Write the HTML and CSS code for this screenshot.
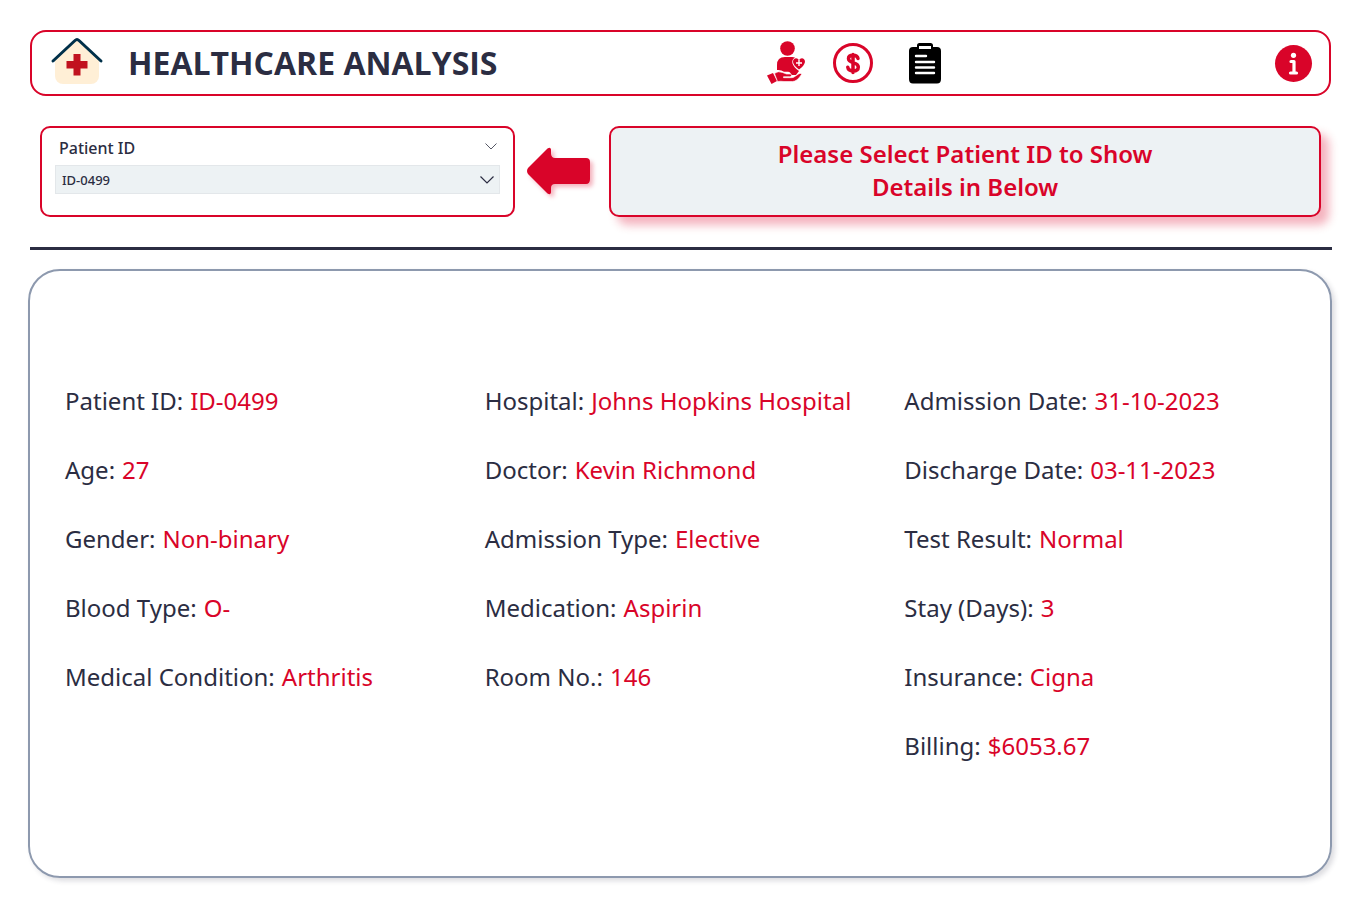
FILE: index.html
```html
<!DOCTYPE html>
<html lang="en">
<head>
<meta charset="utf-8">
<meta name="viewport" content="width=device-width, initial-scale=1">
<title>Healthcare Analysis</title>
<link rel="stylesheet" href="styles.css">
</head>
<body>
<header class="topbar">
  <svg class="logo" viewBox="0 0 52 48" aria-hidden="true">
    <path d="M4 19 26 1 48 19V37a8 8 0 0 1-8 8H12a8 8 0 0 1-8-8Z" fill="#ffefd6"/>
    <path d="M2 22 24 1.500Q26-.5 28 1.500L50 22" fill="none" stroke="#00304a" stroke-width="3" stroke-linecap="round"/>
    <path d="M22.500 15h7v7h7v7.500h-7v7h-7v-7h-7V22h7Z" fill="#c1121f"/>
  </svg>
  <h1 class="title">HEALTHCARE ANALYSIS</h1>
  <nav class="nav">
    <button class="icon-button" aria-label="Patient care">
      <svg width="38" height="43" viewBox="0 0 38 43" fill="#d90429">
        <circle cx="20.500" cy="6.500" r="7.300"/>
        <path d="M10 28V23q0-8 8-8h7q2 0 3 .5-3.500 2-2.500 6 1.500 4 6.500 7.500L29 33h-5q0-3-3-3.200h-4q-3-2.300-7-1.800Z"/>
        <path d="M32 27.500Q26.500 23.500 26 20c0-4 4.500-5 6-1.500 1.500-3.500 6-2.500 6 1.500Q37 24 32 27.500Z"/>
        <path d="M32 18v6M29 21h6" stroke="#fff" stroke-width="1.400"/>
        <path d="M0 33.500 6 31 10 39 4.500 42Z"/>
        <path d="M7.500 31.500q3.500-3 8-1l4 1.500h3.500q2 0 1.500 1.500-.5 1.200-2 1.200h-6v1h8q2 0 3-1l4.500-3q2.500-.8 2.500.8Q30 39.500 25.500 39.500H17q-3.500-.5-6.500 0Z" stroke="#fff" stroke-width=".6"/>
      </svg>
    </button>
    <button class="icon-button" aria-label="Billing">
      <svg width="40" height="40" viewBox="0 0 40 40">
        <circle cx="20" cy="20" r="18.500" fill="none" stroke="#d90429" stroke-width="3"/>
        <path d="M25 15.500q-.5-3.200-5-3.200-4.500 0-4.500 3.300c0 5.500 9.800 3 9.800 8.300q0 4-5.300 4-4.700 0-5.200-3.600M20 11.500v18" fill="none" stroke="#d90429" stroke-width="3.500" stroke-linecap="round"/>
      </svg>
    </button>
    <button class="icon-button icon-button-last" aria-label="Patient details">
      <svg width="32" height="41" viewBox="0 0 32 41">
        <path d="M4 4h4V2.500Q8 0 10.500 0h11Q24 0 24 2.500V4h4q4 0 4 4v28q0 4.500-4 4.500H4q-4 0-4-4.500V8q0-4 4-4Z"/>
        <path d="M10 3h12v3H10Z" fill="#fff"/>
        <path d="M7 13h10M7 19h18M7 24.500h18M7 30h18" stroke="#fff" stroke-width="2.400" stroke-linecap="round"/>
      </svg>
    </button>
  </nav>
  <button class="icon-button" aria-label="Information">
    <svg width="37" height="37" viewBox="0 0 37 37">
      <circle cx="18.500" cy="18.500" r="18.500" fill="#d90429"/>
      <circle cx="18.500" cy="10.300" r="2.600" fill="#fff"/>
      <path d="M16 16.500h3v11M15.500 28h6" fill="none" stroke="#fff" stroke-width="3.200" stroke-linecap="round" stroke-linejoin="round"/>
    </svg>
  </button>
</header>

<section class="selector">
  <div class="filter">
    <div class="filter-head">
      <label for="patient">Patient ID</label>
      <button class="icon-button" aria-label="Collapse filter">
        <svg width="12" height="10" viewBox="0 0 12 10"><path d="m.5.5 5.500 5.500L11.500.5" fill="none" stroke="#555765"/></svg>
      </button>
    </div>
    <div class="select-wrap">
      <select id="patient" class="select"><option>ID-0499</option></select>
      <svg class="select-arrow" width="14" height="8" viewBox="0 0 14 8" aria-hidden="true"><path d="m.5.5 6.500 6.500L13.500.5" fill="none" stroke="#2b2d42" stroke-width="1.200"/></svg>
    </div>
  </div>
  <svg class="arrow" width="64" height="48" viewBox="0 0 64 48" aria-hidden="true">
    <path d="M1 20 20.500.5Q23.500-1.500 24 1.500V6q.5 4 4 4h31q4 0 4 4v17q0 5-4 5H28q-4 0-4 4v4.500q-.5 3-3.500 1L1 26q-2-3 0-6Z" fill="#d90429"/>
  </svg>
  <p class="banner">Please Select Patient ID to Show<br>Details in Below</p>
</section>

<hr class="divider">

<main class="panel">
  <dl class="column">
    <div class="field"><dt>Patient ID:</dt><dd>ID-0499</dd></div>
    <div class="field"><dt>Age:</dt><dd>27</dd></div>
    <div class="field"><dt>Gender:</dt><dd>Non-binary</dd></div>
    <div class="field"><dt>Blood Type:</dt><dd>O-</dd></div>
    <div class="field"><dt>Medical Condition:</dt><dd>Arthritis</dd></div>
  </dl>
  <dl class="column">
    <div class="field"><dt>Hospital:</dt><dd>Johns Hopkins Hospital</dd></div>
    <div class="field"><dt>Doctor:</dt><dd>Kevin Richmond</dd></div>
    <div class="field"><dt>Admission Type:</dt><dd>Elective</dd></div>
    <div class="field"><dt>Medication:</dt><dd>Aspirin</dd></div>
    <div class="field"><dt>Room No.:</dt><dd>146</dd></div>
  </dl>
  <dl class="column">
    <div class="field"><dt>Admission Date:</dt><dd>31-10-2023</dd></div>
    <div class="field"><dt>Discharge Date:</dt><dd>03-11-2023</dd></div>
    <div class="field"><dt>Test Result:</dt><dd>Normal</dd></div>
    <div class="field"><dt>Stay (Days):</dt><dd>3</dd></div>
    <div class="field"><dt>Insurance:</dt><dd>Cigna</dd></div>
    <div class="field"><dt>Billing:</dt><dd>$6053.67</dd></div>
  </dl>
</main>
</body>
</html>
```
FILE: styles.css
```css
* {
  box-sizing: border-box;
}

body {
  display: flex;
  flex-direction: column;
  min-height: 100vh;
  margin: 0;
  padding: 30px 25px 25px 28px;
  background: #fff;
  color: #2b2d42;
  font-family: "Noto Sans", "Open Sans", sans-serif;
}

.topbar {
  display: flex;
  align-items: center;
  height: 66px;
  margin: 0 1px 0 2px;
  padding: 0 17px 0 19px;
  border: 2px solid #d90429;
  border-radius: 16px;
}

.logo {
  width: 52px;
  height: 48px;
  overflow: visible;
}

.title {
  flex: 63;
  margin: 0 0 0 25px;
  font-family: "Open Sans", sans-serif;
  font-size: 32px;
  font-weight: 700;
  line-height: 44px;
}

.nav {
  display: flex;
  flex: 50;
  align-items: center;
  gap: 28px;
}

.icon-button {
  display: flex;
  padding: 0;
  border: 0;
  background: none;
}

.icon-button svg {
  overflow: visible;
}

.icon-button-last {
  margin-left: 8px;
}

.selector {
  display: flex;
  align-items: center;
  gap: 12px;
  margin: 30px 11px 0 12px;
}

.filter {
  flex: 0 0 37.1%;
  height: 91px;
  padding: 9px 13px;
  border: 2px solid #d90429;
  border-radius: 10px;
}

.filter-head {
  display: flex;
  align-items: center;
  justify-content: space-between;
  height: 22px;
  margin: 0 3px 6px 4px;
  font-size: 16px;
  font-weight: 500;
}

.select-wrap {
  position: relative;
}

.select {
  display: block;
  width: 100%;
  height: 29px;
  padding: 0 6px;
  border: 1px solid #e3e7ea;
  border-radius: 0;
  appearance: none;
  background: #edf2f4;
  color: #2b2d42;
  font: 500 13px "Noto Sans", sans-serif;
}

.select-arrow {
  position: absolute;
  top: 11px;
  right: 6px;
}

.arrow {
  flex: none;
  margin-right: 6px;
  overflow: visible;
  filter: drop-shadow(3px 3px 2px rgba(217, 4, 41, 0.3));
}

.banner {
  flex: 1;
  height: 91px;
  margin: 0;
  padding: 9px;
  border: 2px solid #d90429;
  border-radius: 10px;
  background: #edf2f4;
  box-shadow: 8px 8px 10px rgba(217, 4, 41, 0.3);
  color: #d90429;
  font-size: 24px;
  font-weight: 600;
  line-height: 33px;
  text-align: center;
}

.divider {
  width: auto;
  height: 3px;
  margin: 30px 0 19px 2px;
  border: 0;
  background: #2b2d42;
}

.panel {
  display: grid;
  flex: 1;
  grid-template-columns: repeat(3, 1fr);
  padding: 95px 6px 95px 35px;
  border: 2px solid #8d99ae;
  border-radius: 32px;
  box-shadow: 3px 3px 5px rgba(43, 45, 66, 0.16);
}

.column {
  margin: 0;
}

.field {
  display: flex;
  gap: 7px;
  height: 69px;
  align-items: center;
  font-size: 24px;
  white-space: nowrap;
}

.field dd {
  margin: 0;
  color: #d90429;
}
```
